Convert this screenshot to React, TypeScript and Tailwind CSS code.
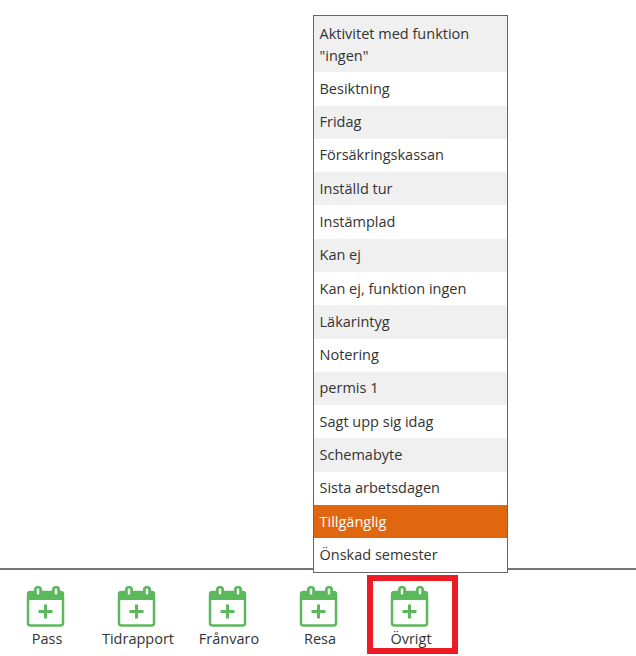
import React from 'react';

const font = "font-['Open_Sans','Noto_Sans',sans-serif]";

const items = [
  'Aktivitet med funktion "ingen"',
  'Besiktning',
  'Fridag',
  'Försäkringskassan',
  'Inställd tur',
  'Instämplad',
  'Kan ej',
  'Kan ej, funktion ingen',
  'Läkarintyg',
  'Notering',
  'permis 1',
  'Sagt upp sig idag',
  'Schemabyte',
  'Sista arbetsdagen',
  'Tillgänglig',
  'Önskad semester',
];

const tabs = ['Pass', 'Tidrapport', 'Frånvaro', 'Resa', 'Övrigt'];

const CalendarPlus = () => (
  <svg width="39" height="41" viewBox="0 0 39 41" className="block" fill="none">
    <path d="M4 5h31a3 3 0 0 1 3 3v6H1V8a3 3 0 0 1 3-3z" fill="#5cb85c" />
    <rect x="2" y="6" width="35" height="33.5" rx="2.5" stroke="#5cb85c" strokeWidth="2.5" />
    <rect x="8" y="0" width="8" height="11" rx="3.5" fill="#5cb85c" />
    <rect x="26" y="0" width="8" height="11" rx="3.5" fill="#5cb85c" />
    <rect x="10.8" y="2.5" width="2.4" height="6" rx="1" fill="#fff" />
    <rect x="28.8" y="2.5" width="2.4" height="6" rx="1" fill="#fff" />
    <path d="M19.5 18.5v14M12.5 25.5h14" stroke="#5cb85c" strokeWidth="3" />
  </svg>
);

export default function App() {
  return (
    <div className={`relative h-[656px] w-[636px] overflow-hidden bg-white flex flex-col justify-end ${font}`}>
      {/* Bottom tab bar */}
      <div className="h-[88px] border-t-2 border-[#757575] flex items-start">
        {tabs.map(tab => (
          <div key={tab} className="w-[91px] pt-[16px] flex flex-col items-center text-[14.5px] leading-[20px] text-[#333]">
            <CalendarPlus />
            <span className="mt-[2px] pl-[3px]">{tab}</span>
          </div>
        ))}
      </div>

      {/* Dropdown menu */}
      <ul className="absolute left-[313px] top-[15px] w-[195px] border-[1.5px] border-[#666] bg-white text-[14.5px] text-[#333]">
        {items.map((item, i) => (
          <li
            key={item}
            className={`px-[5.5px] py-[5.65px] first:pt-[6.65px] leading-[22px] ${
              item === 'Tillgänglig' ? 'bg-[#e0660f] text-white' : i % 2 === 0 ? 'bg-[#f0f0f0]' : 'bg-white'
            }`}
          >
            {item}
          </li>
        ))}
      </ul>

      {/* Red annotation */}
      <div className="absolute left-[367px] top-[575px] w-[91px] h-[79px] border-[6px] border-[#ed1c24]" />
    </div>
  );
}
